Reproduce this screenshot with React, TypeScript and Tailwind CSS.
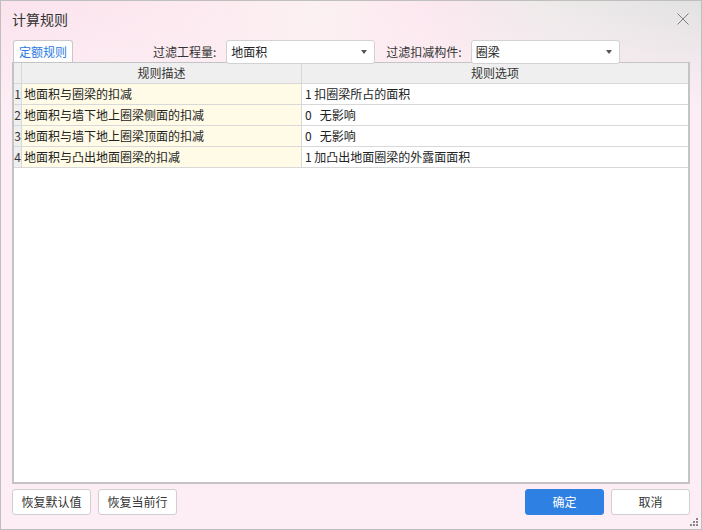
const rows = [
  { no: 1, desc: "地面积与圈梁的扣减", opt: "1 扣圈梁所占的面积" },
  { no: 2, desc: "地面积与墙下地上圈梁侧面的扣减", opt: "0   无影响" },
  { no: 3, desc: "地面积与墙下地上圈梁顶面的扣减", opt: "0   无影响" },
  { no: 4, desc: "地面积与凸出地面圈梁的扣减", opt: "1 加凸出地面圈梁的外露面面积" },
];

const Select = ({ value, width }: { value: string; width: string }) => (
  <div
    className={`relative z-10 flex h-[24px] ${width} items-center justify-between rounded-[3px] border border-[#d2d2d2] bg-white pl-[4px] pr-[7px] text-[12px] text-[#222]`}
  >
    <span>{value}</span>
    <svg width="6" height="4" viewBox="0 0 6 4">
      <path d="M0 0h6L3 4z" fill="#555" />
    </svg>
  </div>
);

const Btn = ({ label, primary }: { label: string; primary?: boolean }) => (
  <button
    className={`h-[26px] w-[79px] rounded-[3px] border text-[12px] ${
      primary
        ? "border-[#2f80e3] bg-[#2f80e3] text-white"
        : "border-[#cfcfcf] bg-white text-[#333]"
    }`}
  >
    {label}
  </button>
);

const App = () => {
  return (
    <div
      className="flex h-[530px] w-[702px] flex-col border border-[#bfbfbf] bg-[linear-gradient(180deg,rgba(253,238,245,0)_0px,#fdeef5_110px),linear-gradient(90deg,#fbe3ed_0%,#fde9f0_25%,#fbf1f1_45%,#fde8f0_60%,#eeeaea_78%,#e2e2e2_100%)] text-[#333]"
      style={{ fontFamily: '"Noto Sans CJK SC", "Noto Sans", sans-serif' }}
    >
      <div className="flex h-[36px] shrink-0 items-center justify-between pl-[11px] pr-[12px]">
        <span className="text-[14px] text-[#333]">计算规则</span>
        <svg width="12" height="12" viewBox="0 0 12 12">
          <path d="M0.5 0.5l11 11M11.5 0.5l-11 11" stroke="#808080" strokeWidth="1" />
        </svg>
      </div>

      <div className="mt-[3px] flex h-[22px] shrink-0 items-start">
        <div className="ml-[12px] flex h-[22px] w-[60px] items-center justify-center rounded-t-[3px] border border-b-0 border-[#c8c8c8] bg-white text-[12px] text-[#2a7ae2]">
          定额规则
        </div>
        <span className="ml-[80px] flex h-[24px] items-center text-[12px] text-[#333]">过滤工程量:</span>
        <div className="ml-[10px]">
          <Select value="地面积" width="w-[149px]" />
        </div>
        <span className="ml-[11px] flex h-[24px] items-center text-[12px] text-[#333]">过滤扣减构件:</span>
        <div className="ml-[9px]">
          <Select value="圈梁" width="w-[149px]" />
        </div>
      </div>

      <div className="mx-[11px] flex-1 border-2 border-t border-[#c4c4c4] bg-white text-[12px]">
        <div className="flex h-[21px] border-b border-[#d8d8d8] bg-[#efefef]">
          <div className="w-[8px] border-r border-[#d8d8d8]" />
          <div className="flex w-[280px] items-center justify-center border-r border-[#d8d8d8]">规则描述</div>
          <div className="flex flex-1 items-center justify-center">规则选项</div>
        </div>
        {rows.map((r) => (
          <div key={r.no} className="flex h-[21px] border-b border-[#d8d8d8]">
            <div className="flex w-[8px] items-center justify-center border-r border-[#d8d8d8] bg-[#efefef] text-[#333]">
              {r.no}
            </div>
            <div className="flex w-[280px] items-center whitespace-pre border-r border-[#d8d8d8] bg-[#fffbe6] pl-[2px] text-[#222]">
              {r.desc}
            </div>
            <div className="flex flex-1 items-center whitespace-pre pl-[3px] text-[#222]">{r.opt}</div>
          </div>
        ))}
      </div>

      <div className="relative flex h-[45px] shrink-0 items-start px-[11px] pt-[5px]">
        <div className="flex gap-[7px]">
          <Btn label="恢复默认值" />
          <Btn label="恢复当前行" />
        </div>
        <div className="ml-auto flex gap-[7px]">
          <Btn label="确定" primary />
          <Btn label="取消" />
        </div>
        <svg className="absolute bottom-[3px] right-[3px]" width="8" height="8" viewBox="0 0 8 8">
          <rect x="6" y="0" width="2" height="2" fill="#888" />
          <rect x="3" y="3" width="2" height="2" fill="#888" />
          <rect x="6" y="3" width="2" height="2" fill="#888" />
          <rect x="0" y="6" width="2" height="2" fill="#888" />
          <rect x="3" y="6" width="2" height="2" fill="#888" />
          <rect x="6" y="6" width="2" height="2" fill="#888" />
        </svg>
      </div>
    </div>
  );
};

export default App;
